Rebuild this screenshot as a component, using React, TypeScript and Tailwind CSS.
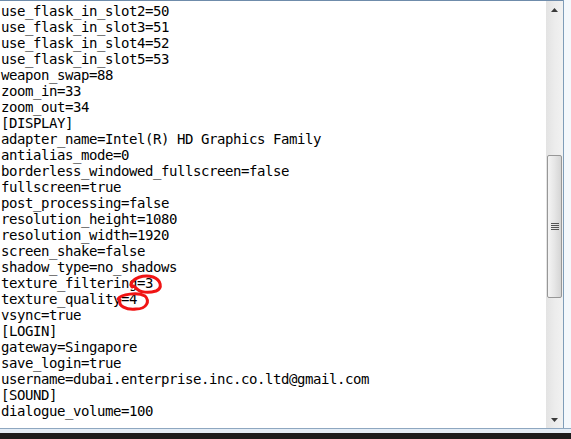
import React from "react";

const lines = [
  "use_flask_in_slot2=50",
  "use_flask_in_slot3=51",
  "use_flask_in_slot4=52",
  "use_flask_in_slot5=53",
  "weapon_swap=88",
  "zoom_in=33",
  "zoom_out=34",
  "[DISPLAY]",
  "adapter_name=Intel(R) HD Graphics Family",
  "antialias_mode=0",
  "borderless_windowed_fullscreen=false",
  "fullscreen=true",
  "post_processing=false",
  "resolution_height=1080",
  "resolution_width=1920",
  "screen_shake=false",
  "shadow_type=no_shadows",
  "texture_filtering=3",
  "texture_quality=4",
  "vsync=true",
  "[LOGIN]",
  "gateway=Singapore",
  "save_login=true",
  "username=dubai.enterprise.inc.co.ltd@gmail.com",
  "[SOUND]",
  "dialogue_volume=100",
];

export default function App() {
  return (
    <div className="w-[571px] h-[439px] bg-[#1c1c1c] flex flex-col overflow-hidden">
      <div className="h-[433px] flex flex-col bg-[#eef3f8]">
        <div className="flex h-[428px]">
          {/* text + scrollbar */}
          <div className="w-[563px] flex border-t border-[#6f8cab] bg-white">
            <div className="relative w-[546px] h-full overflow-hidden pt-[2px] pl-[1px]">
              {lines.map((l, i) => (
                <div
                  key={i}
                  className="h-[16px] leading-[16px] text-[14px] tracking-[-0.43px] text-black whitespace-pre"
                  style={{ fontFamily: '"DejaVu Sans Mono", "Liberation Mono", monospace' }}
                >
                  {l}
                </div>
              ))}
              <svg
                className="absolute left-0 top-[-1px] pointer-events-none"
                width="546"
                height="427"
                viewBox="0 0 546 427"
              >
                <path
                  d="M131,285 C132,278 144,274 153,277 C161,280 163,288 156,291 C149,293 140,293 136,288 C134,286 133,285 132,287"
                  fill="none"
                  stroke="#f01414"
                  strokeWidth="3"
                  strokeLinecap="round"
                />
                <path
                  d="M118,299 C121,294 138,292 145,296 C150,301 147,309 136,309 C126,310 118,306 120,300"
                  fill="none"
                  stroke="#f01414"
                  strokeWidth="3"
                  strokeLinecap="round"
                />
              </svg>
            </div>
            {/* scrollbar */}
            <div className="w-[17px] h-full bg-gradient-to-r from-[#e3e3e3] via-[#ececec] to-[#f2f2f2] flex flex-col">
              <div className="h-[17px] flex items-center justify-center">
                <svg width="7" height="4" viewBox="0 0 7 4">
                  <path d="M3.5,0 L7,4 L0,4 Z" fill="#3a3a3a" />
                </svg>
              </div>
              <div className="h-[137px]" />
              <div className="h-[143px] mx-[1px] rounded-[2px] border border-[#979797] bg-gradient-to-r from-[#f4f4f4] via-[#e6e6e6] to-[#d5d5d5] flex items-center justify-center">
                <div className="flex flex-col gap-[1px]">
                  <div className="w-[8px] h-[1px] bg-[#555]" />
                  <div className="w-[8px] h-[1px] bg-[#555]" />
                  <div className="w-[8px] h-[1px] bg-[#555]" />
                  <div className="w-[8px] h-[1px] bg-[#555]" />
                </div>
              </div>
              <div className="flex-1" />
              <div className="h-[17px] flex items-center justify-center">
                <svg width="7" height="4" viewBox="0 0 7 4">
                  <path d="M0,0 L7,0 L3.5,4 Z" fill="#3a3a3a" />
                </svg>
              </div>
            </div>
          </div>
          <div className="w-[1px] bg-[#7f9db9]" />
          <div className="flex-1 bg-[#f4f8fc]" />
        </div>
        <div className="h-[1px] bg-[#8ea7c0]" />
        <div className="flex-1 bg-[#e4edf6]" />
      </div>
    </div>
  );
}
